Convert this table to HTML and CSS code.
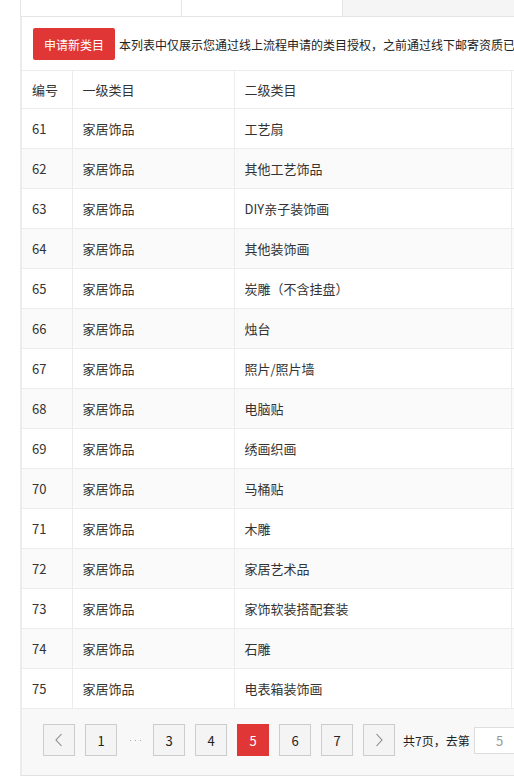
FILE: index.html
```html
<!DOCTYPE html>
<html lang="zh-CN">
<head>
<meta charset="utf-8">
<title>类目授权</title>
<link rel="stylesheet" href="styles.css">
</head>
<body>
<div class="page">
  <div class="tabs">
    <div class="tab"></div>
    <div class="tab"></div>
    <div class="tab-rest"></div>
  </div>
  <div class="panel">
    <div class="toolbar">
      <button class="btn-apply">申请新类目</button>
      <span class="note">本列表中仅展示您通过线上流程申请的类目授权，之前通过线下邮寄资质已</span>
    </div>
    <table class="grid">
      <colgroup>
        <col class="c-id"><col class="c-l1"><col class="c-l2"><col class="c-more">
      </colgroup>
      <thead>
        <tr><th>编号</th><th>一级类目</th><th>二级类目</th><th></th></tr>
      </thead>
      <tbody>
        <tr><td>61</td><td>家居饰品</td><td>工艺扇</td><td></td></tr>
        <tr><td>62</td><td>家居饰品</td><td>其他工艺饰品</td><td></td></tr>
        <tr><td>63</td><td>家居饰品</td><td>DIY亲子装饰画</td><td></td></tr>
        <tr><td>64</td><td>家居饰品</td><td>其他装饰画</td><td></td></tr>
        <tr><td>65</td><td>家居饰品</td><td>炭雕（不含挂盘）</td><td></td></tr>
        <tr><td>66</td><td>家居饰品</td><td>烛台</td><td></td></tr>
        <tr><td>67</td><td>家居饰品</td><td>照片/照片墙</td><td></td></tr>
        <tr><td>68</td><td>家居饰品</td><td>电脑贴</td><td></td></tr>
        <tr><td>69</td><td>家居饰品</td><td>绣画织画</td><td></td></tr>
        <tr><td>70</td><td>家居饰品</td><td>马桶贴</td><td></td></tr>
        <tr><td>71</td><td>家居饰品</td><td>木雕</td><td></td></tr>
        <tr><td>72</td><td>家居饰品</td><td>家居艺术品</td><td></td></tr>
        <tr><td>73</td><td>家居饰品</td><td>家饰软装搭配套装</td><td></td></tr>
        <tr><td>74</td><td>家居饰品</td><td>石雕</td><td></td></tr>
        <tr><td>75</td><td>家居饰品</td><td>电表箱装饰画</td><td></td></tr>
      </tbody>
    </table>
    <div class="pager">
      <a class="pg pg-arrow" href="#"><svg width="10" height="14" viewBox="0 0 10 14"><path d="M7.5 1 L2 7 L7.5 13" fill="none" stroke="#888" stroke-width="1.1"/></svg></a>
      <a class="pg" href="#">1</a>
      <span class="dots"><i></i><i></i><i></i></span>
      <a class="pg" href="#">3</a>
      <a class="pg" href="#">4</a>
      <a class="pg pg-on" href="#">5</a>
      <a class="pg" href="#">6</a>
      <a class="pg" href="#">7</a>
      <a class="pg pg-arrow" href="#"><svg width="10" height="14" viewBox="0 0 10 14"><path d="M2.5 1 L8 7 L2.5 13" fill="none" stroke="#888" stroke-width="1.1"/></svg></a>
      <span class="total">共7页，去第</span>
      <input class="goto" type="text" value="5">
    </div>
  </div>
</div>
</body>
</html>
```
FILE: styles.css
```css
html, body {
  margin: 0;
  padding: 0;
  background: #fff;
  overflow: hidden;
}
body {
  font-family: "Noto Sans CJK SC", "Noto Sans", sans-serif;
  color: #333;
  font-size: 13px;
}
.page {
  margin-left: 20px;
  width: 760px;
}
.tabs {
  display: flex;
  height: 16px;
  border-left: 1px solid #e6e6e6;
  border-bottom: 1px solid #e6e6e6;
}
.tab {
  width: 160px;
  border-right: 1px solid #e6e6e6;
  background: #fff;
}
.tab-rest {
  flex: 1;
  background: #f5f5f5;
}
.panel {
  border-left: 2px solid #ececec;
  border-bottom: 1px solid #e2e2e2;
  background: #fff;
}
.toolbar {
  display: flex;
  align-items: center;
  gap: 4px;
  padding: 11px 0 10px 11px;
  white-space: nowrap;
  overflow: hidden;
}
.btn-apply {
  width: 82px;
  height: 32px;
  border: 0;
  border-radius: 2px;
  background: #e03636;
  color: #fff;
  font-family: inherit;
  font-size: 12px;
  padding: 0;
  flex: none;
}
.note {
  font-size: 12px;
  color: #222;
}
.grid {
  border-collapse: collapse;
  table-layout: fixed;
  width: 100%;
}
.c-id { width: 50px; }
.c-l1 { width: 162px; }
.c-l2 { width: 277px; }
.grid th, .grid td {
  border: 1px solid #ececec;
  text-align: left;
  padding: 0 10px;
  font-weight: normal;
  white-space: nowrap;
}
.grid th:first-child, .grid td:first-child { border-left: 0; }
.grid th {
  height: 37px;
  color: #333;
}
.grid td {
  height: 39px;
  color: #333;
}
.grid tbody tr:nth-child(even) td { background: #fafafa; }
.pager {
  display: flex;
  align-items: center;
  background: #f8f8f8;
  padding: 15px 0 19px 21px;
  gap: 10px;
}
.pg {
  box-sizing: border-box;
  width: 32px;
  height: 32px;
  border: 1px solid #ccc;
  background: #f4f4f4;
  color: #222;
  text-decoration: none;
  font-size: 13px;
  display: flex;
  align-items: center;
  justify-content: center;
  flex: none;
}
.pg-on {
  background: #e03636;
  border-color: #e03636;
  color: #fff;
}
.dots {
  width: 16px;
  display: flex;
  justify-content: center;
  gap: 4px;
  flex: none;
}
.dots i {
  width: 1px;
  height: 1px;
  background: #aaa;
}
.total {
  font-size: 12px;
  color: #222;
  margin-left: -2px;
  white-space: nowrap;
}
.goto {
  box-sizing: border-box;
  width: 52px;
  height: 27px;
  margin-left: -6px;
  border: 1px solid #ddd;
  background: #fff;
  color: #999;
  text-align: center;
  font-family: inherit;
  font-size: 13px;
  padding: 0;
  flex: none;
}
```
